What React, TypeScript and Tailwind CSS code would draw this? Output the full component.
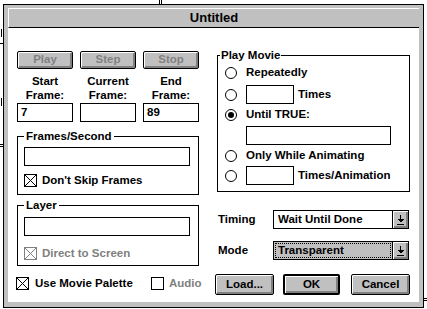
import type { ReactNode } from 'react';

const FACE = 'bg-[#c0c0c0]';
const BEVEL = 'shadow-[inset_1px_1px_0_#ffffff,inset_-2px_-2px_0_#808080]';

function PushButton({
  children,
  disabled = false,
  isDefault = false,
  className = '',
}: {
  children: ReactNode;
  disabled?: boolean;
  isDefault?: boolean;
  className?: string;
}) {
  return (
    <button
      type="button"
      className={`flex items-center justify-center rounded-[2px] ${FACE} ${BEVEL} ${
        isDefault ? 'border-2' : 'border'
      } border-black ${disabled ? 'text-[#808080]' : 'text-black'} ${className}`}
    >
      {children}
    </button>
  );
}

function TextBox({ value = '', className = '' }: { value?: string; className?: string }) {
  return (
    <div className={`flex h-[19px] items-center border border-black bg-white pl-[3px] ${className}`}>
      {value}
    </div>
  );
}

function CheckBox({ checked = false, disabled = false }: { checked?: boolean; disabled?: boolean }) {
  const ink = disabled ? '#808080' : '#000000';
  return (
    <span
      className={`block h-[13px] w-[13px] shrink-0 border bg-white ${
        disabled ? 'border-[#808080]' : 'border-black'
      }`}
    >
      {checked && (
        <svg width="11" height="11" viewBox="0 0 11 11" className="block">
          <path d="M0 0L11 11M11 0L0 11" stroke={ink} strokeWidth="1" />
        </svg>
      )}
    </span>
  );
}

function Radio({ selected = false }: { selected?: boolean }) {
  return (
    <span className="flex h-[12px] w-[12px] shrink-0 items-center justify-center rounded-full border border-black bg-white">
      {selected && <span className="h-[6px] w-[6px] rounded-full bg-black" />}
    </span>
  );
}

function DropArrow() {
  return (
    <svg width="7" height="10" viewBox="0 0 7 10" shapeRendering="crispEdges" className="block">
      <rect x="3" y="0" width="1" height="4" fill="#000" />
      <path d="M0 4H7L3.5 7.5Z" fill="#000" />
      <rect x="0" y="9" width="7" height="1" fill="#000" />
    </svg>
  );
}

function DropDown({ value, focused = false }: { value: string; focused?: boolean }) {
  return (
    <div className={`flex h-[19px] w-[136px] border border-black ${focused ? FACE : 'bg-white'}`}>
      <div className="flex min-w-0 flex-1 items-stretch p-[1px]">
        <div
          className={`flex flex-1 items-center pl-[2px] ${
            focused ? 'border border-dotted border-black' : 'border border-transparent'
          }`}
        >
          {value}
        </div>
      </div>
      <div className={`flex w-[16px] items-center justify-center border-l border-black ${FACE} ${BEVEL}`}>
        <DropArrow />
      </div>
    </div>
  );
}

function GroupBox({
  title,
  legendClass,
  className,
  children,
}: {
  title: string;
  legendClass: string;
  className: string;
  children: ReactNode;
}) {
  return (
    <fieldset className={`border border-black ${className}`}>
      <legend className={`leading-[12px] ${legendClass}`}>{title}</legend>
      {children}
    </fieldset>
  );
}

export default function App() {
  return (
    <div className="relative h-[309px] w-[427px] overflow-hidden bg-white font-['Liberation_Sans',Arial,sans-serif] text-[11.5px] font-bold text-black">
      {/* bits of the stage behind the dialog */}
      <div className="absolute left-[159px] top-0 h-[4px] w-px bg-black" />
      <div className="absolute left-[161px] top-0 h-[4px] w-px bg-black" />
      <div className="absolute left-[1px] top-[29px] h-[8px] w-px bg-black" />
      <div className="absolute left-0 top-[43px] h-px w-[3px] bg-black" />
      <div className="absolute left-[1px] top-[98px] h-[8px] w-px bg-black" />
      <div className="absolute left-0 top-[144px] h-px w-[3px] bg-black" />
      <div className="absolute left-0 top-[146px] h-px w-[3px] bg-black" />
      <div className="absolute left-[423px] top-[298px] h-px w-[4px] bg-black" />
      <div className="absolute left-[423px] top-[300px] h-px w-[4px] bg-black" />

      {/* dialog window */}
      <div className="absolute left-[3px] top-[4px] flex h-[304px] w-[421px] flex-col border border-black bg-[#c0c0c0] px-[4px] pb-[5px] pt-[3px]">
        <div className="flex h-[20px] shrink-0 items-center justify-center border-b border-l border-t border-b-black border-l-white border-t-white bg-[#c0c0c0] text-[13px]">
          Untitled
        </div>

        <div className="flex flex-1 gap-[16px] bg-white pl-[9px] pt-[21px]">
          {/* left column */}
          <div className="mt-[2px] flex w-[182px] flex-col">
            <div className="grid grid-cols-3 gap-[7px]">
              <PushButton disabled className="h-[18px]">Play</PushButton>
              <PushButton disabled className="h-[18px]">Step</PushButton>
              <PushButton disabled className="h-[18px]">Stop</PushButton>
            </div>
            <div className="mt-[5px] grid grid-cols-3 gap-[7px] text-center leading-[14px]">
              <div>Start<br />Frame:</div>
              <div>Current<br />Frame:</div>
              <div>End<br />Frame:</div>
            </div>
            <div className="mt-px grid grid-cols-3 gap-[7px]">
              <TextBox value="7" />
              <TextBox />
              <TextBox value="89" />
            </div>

            <GroupBox title="Frames/Second" legendClass="px-[2px]" className="mt-[8px] px-[6px] pb-[7px]">
              <TextBox className="mt-[5px] w-[166px]" />
              <div className="mt-[8px] flex h-[13px] items-center gap-[5px]">
                <CheckBox checked />
                <span>Don&apos;t Skip Frames</span>
              </div>
            </GroupBox>

            <GroupBox title="Layer" legendClass="px-[2px]" className="mt-[4px] px-[6px] pb-[5px]">
              <TextBox className="mt-[6px] w-[166px]" />
              <div className="mt-[11px] flex h-[13px] items-center gap-[5px] text-[#808080]">
                <CheckBox checked disabled />
                <span>Direct to Screen</span>
              </div>
            </GroupBox>

            <div className="-ml-px mt-[11px] flex h-[13px] items-center">
              <div className="flex w-[135px] shrink-0 items-center gap-[6px]">
                <CheckBox checked />
                <span>Use Movie Palette</span>
              </div>
              <div className="flex items-center gap-[5px] text-[#808080]">
                <CheckBox />
                <span>Audio</span>
              </div>
            </div>
          </div>

          {/* right column */}
          <div className="flex w-[195px] flex-col">
            <GroupBox title="Play Movie" legendClass="-ml-[5px] px-[1px]" className="ml-[2px] w-[193px] px-[7px] pb-[6px]">
              <div className="mt-[5px] flex h-[14px] items-center gap-[9px]">
                <Radio />
                <span>Repeatedly</span>
              </div>
              <div className="mt-[5px] flex h-[19px] items-center">
                <Radio />
                <TextBox className="ml-[9px] w-[48px]" />
                <span className="ml-[4px]">Times</span>
              </div>
              <div className="mt-[4px] flex h-[14px] items-center gap-[9px]">
                <Radio selected />
                <span>Until TRUE:</span>
              </div>
              <TextBox className="ml-[21px] mt-[4px] w-[145px]" />
              <div className="mt-[4px] flex h-[14px] items-center gap-[9px]">
                <Radio />
                <span>Only While Animating</span>
              </div>
              <div className="mt-[3px] flex h-[19px] items-center">
                <Radio />
                <TextBox className="ml-[9px] w-[48px]" />
                <span className="ml-[4px]">Times/Animation</span>
              </div>
            </GroupBox>

            <div className="mt-[18px] flex items-center">
              <span className="w-[58px] pl-[3px]">Timing</span>
              <DropDown value="Wait Until Done" />
            </div>
            <div className="mt-[12px] flex items-center">
              <span className="w-[58px] pl-[3px]">Mode</span>
              <DropDown value="Transparent" focused />
            </div>

            <div className="mt-[14px] flex">
              <PushButton className="h-[21px] w-[59px]">Load...</PushButton>
              <PushButton isDefault className="ml-[9px] h-[21px] w-[57px]">OK</PushButton>
              <PushButton className="ml-[11px] h-[21px] w-[59px]">Cancel</PushButton>
            </div>
          </div>
        </div>
      </div>
    </div>
  );
}
